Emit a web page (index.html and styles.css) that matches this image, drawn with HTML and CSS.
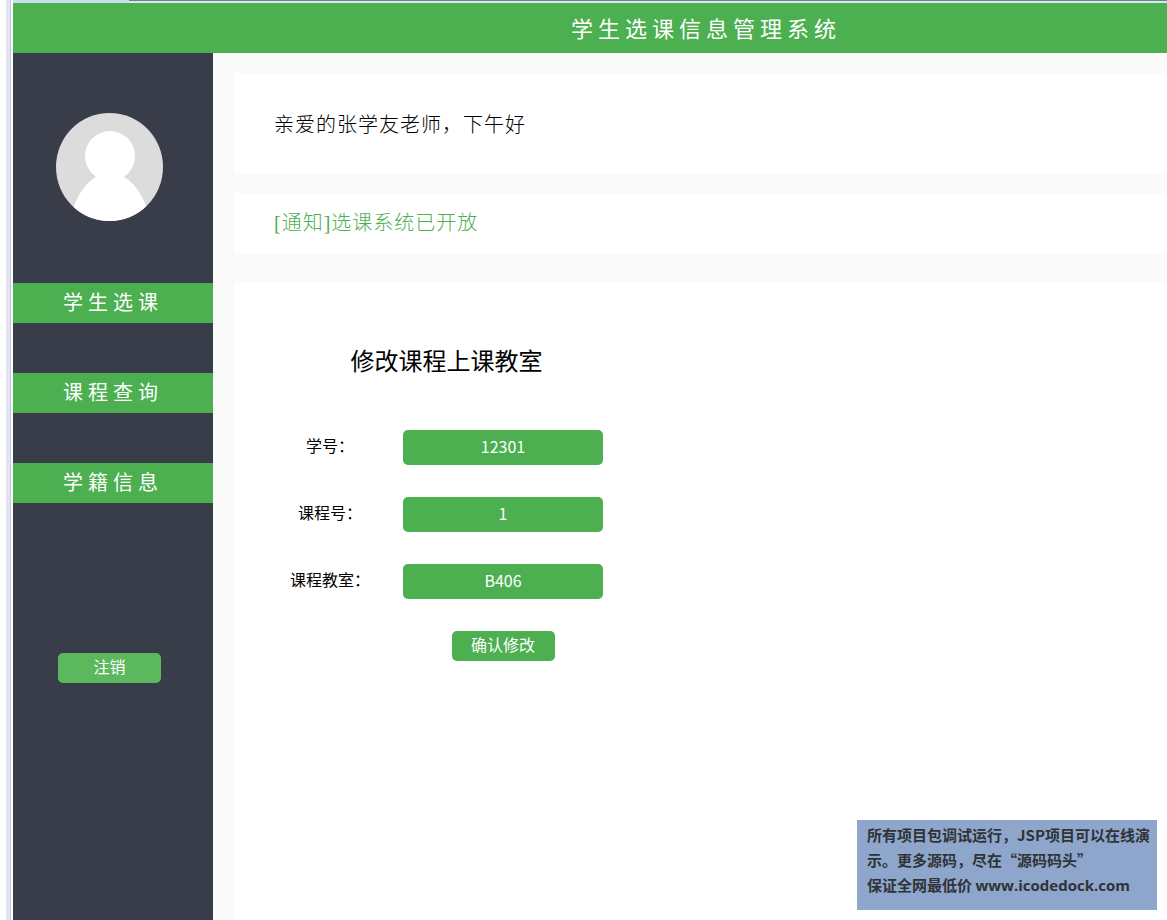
FILE: index.html
```html
<!DOCTYPE html>
<html lang="zh-CN">
<head>
<meta charset="utf-8">
<meta name="viewport" content="width=device-width, initial-scale=1">
<title>学生选课信息管理系统</title>
<link rel="stylesheet" href="styles.css">
</head>
<body>
<div class="frame">
  <div class="edge"></div>
  <div class="app">
    <div class="tabline"><span class="tabline-active"></span><span class="tabline-rest"></span></div>
    <header class="header"><h1 class="title">学生选课信息管理系统</h1></header>
    <div class="body">
      <aside class="sidebar">
        <svg class="avatar" viewBox="0 0 107 108" aria-hidden="true">
          <defs><clipPath id="disc"><ellipse cx="53.5" cy="54" rx="53.5" ry="54"/></clipPath></defs>
          <g clip-path="url(#disc)">
            <rect width="107" height="108" fill="#dcdcdc"/>
            <circle cx="54" cy="43" r="25" fill="#fff"/>
            <path d="M14 108C18 88 26 72 41 63Q54 57 67 63C82 72 90 88 94 108Z" fill="#fff"/>
          </g>
        </svg>
        <nav class="nav">
          <a class="nav-link" href="#select">学生选课</a>
          <a class="nav-link" href="#query">课程查询</a>
          <a class="nav-link" href="#info">学籍信息</a>
        </nav>
        <button class="btn btn-logout" type="button">注销</button>
      </aside>
      <main class="main">
        <section class="panel greeting">亲爱的张学友老师，下午好</section>
        <section class="panel notice"><a class="notice-link" href="#notice">[通知]选课系统已开放</a></section>
        <section class="panel content">
          <form class="form">
            <h2 class="form-title">修改课程上课教室</h2>
            <label class="label" for="sid">学号：</label>
            <input class="field" id="sid" type="text" value="12301">
            <label class="label" for="cid">课程号：</label>
            <input class="field" id="cid" type="text" value="1">
            <label class="label" for="room">课程教室：</label>
            <input class="field" id="room" type="text" value="B406">
            <button class="btn btn-submit" type="button">确认修改</button>
          </form>
        </section>
      </main>
    </div>
  </div>
</div>
<div class="promo">所有项目包调试运行，JSP项目可以在线演示。更多源码，尽在“源码码头”<br>保证全网最低价 <span class="latin">www.icodedock.com</span></div>
</body>
</html>
```
FILE: styles.css
```css
* { box-sizing: border-box; }

body {
  margin: 0;
  background: #fff;
  color: #000;
  font-family: "Noto Sans CJK SC", sans-serif;
  font-size: 16px;
}

.frame {
  display: flex;
  min-height: 100vh;
  padding-left: 6px;
}

.edge {
  flex: none;
  width: 5px;
  margin-right: 2px;
  background: #e4e4f4;
  border-right: 1px solid #c4c8dc;
}

.app {
  flex: 1;
  min-width: 0;
  display: flex;
  flex-direction: column;
}

.tabline {
  display: flex;
  height: 3px;
  background: #d5e9ee;
}

.tabline-active { width: 116px; background: #c5e1ee; }
.tabline-rest { flex: 1; border-top: 1px solid #6d8490; }

.header {
  height: 50px;
  padding-left: 232px;
  background: #4caf50;
  text-align: center;
}

.title {
  margin: 0;
  color: #fff;
  font-size: 22px;
  font-weight: 400;
  line-height: 48px;
  letter-spacing: 5px;
}

.body { flex: 1; display: flex; }

.sidebar {
  flex: none;
  width: 200px;
  padding-top: 60px;
  background: #393d49;
}

.avatar {
  display: block;
  width: 107px;
  height: 108px;
  margin: 0 0 62px 43px;
}

.nav {
  display: flex;
  flex-direction: column;
  gap: 50px;
  margin-bottom: 150px;
}

.nav-link {
  background: #4caf50;
  color: #fff;
  font-size: 20px;
  line-height: 38px;
  height: 40px;
  letter-spacing: 5px;
  text-align: center;
  text-decoration: none;
}

.btn {
  display: block;
  width: 103px;
  height: 30px;
  padding: 0 0 3px;
  border: 0;
  border-radius: 5px;
  background: #4caf50;
  color: #fff;
  font: 16px/27px "Noto Sans CJK SC", sans-serif;
}

.btn-logout { margin-left: 45px; background: #5cb85c; }

.main {
  flex: 1;
  min-width: 0;
  display: flex;
  flex-direction: column;
  padding: 20px 0 0 21px;
  background: #fafafa;
}

.panel { background: #fff; padding: 0 40px; }

.greeting, .notice {
  margin-bottom: 20px;
  font-family: "Liberation Serif", "Noto Sans CJK SC", serif;
  font-size: 20px;
  font-weight: 300;
  letter-spacing: 1px;
}

.greeting { padding-top: 4px; line-height: 96px; }
.notice { line-height: 60px; margin-bottom: 30px; }
.notice-link { color: #4caf50; text-decoration: none; }

.content { flex: 1; padding: 58px 56px; }

.form {
  display: grid;
  grid-template-columns: 80px 200px;
  column-gap: 33px;
  row-gap: 32px;
  width: max-content;
}

.form-title {
  grid-column: 1 / -1;
  margin: 0 0 20px;
  font-size: 24px;
  font-weight: 400;
  line-height: 37px;
  text-align: center;
}

.label { line-height: 30px; text-align: center; white-space: nowrap; }

.field {
  width: 100%;
  height: 35px;
  padding: 0 0 4px;
  border: 0;
  border-radius: 5px;
  background: #4caf50;
  color: #fff;
  font: 16px "Noto Sans CJK SC", sans-serif;
  text-align: center;
}

.btn-submit { grid-column: 2; justify-self: center; }

.promo {
  position: fixed;
  right: 10px;
  bottom: 10px;
  width: 300px;
  height: 90px;
  padding: 2px 4px 12px 10px;
  background: #8ea6cb;
  color: #2f3337;
  font-size: 15px;
  font-weight: 700;
  line-height: 25px;
}

.latin { font-family: "Open Sans", sans-serif; line-height: 1; }
```
